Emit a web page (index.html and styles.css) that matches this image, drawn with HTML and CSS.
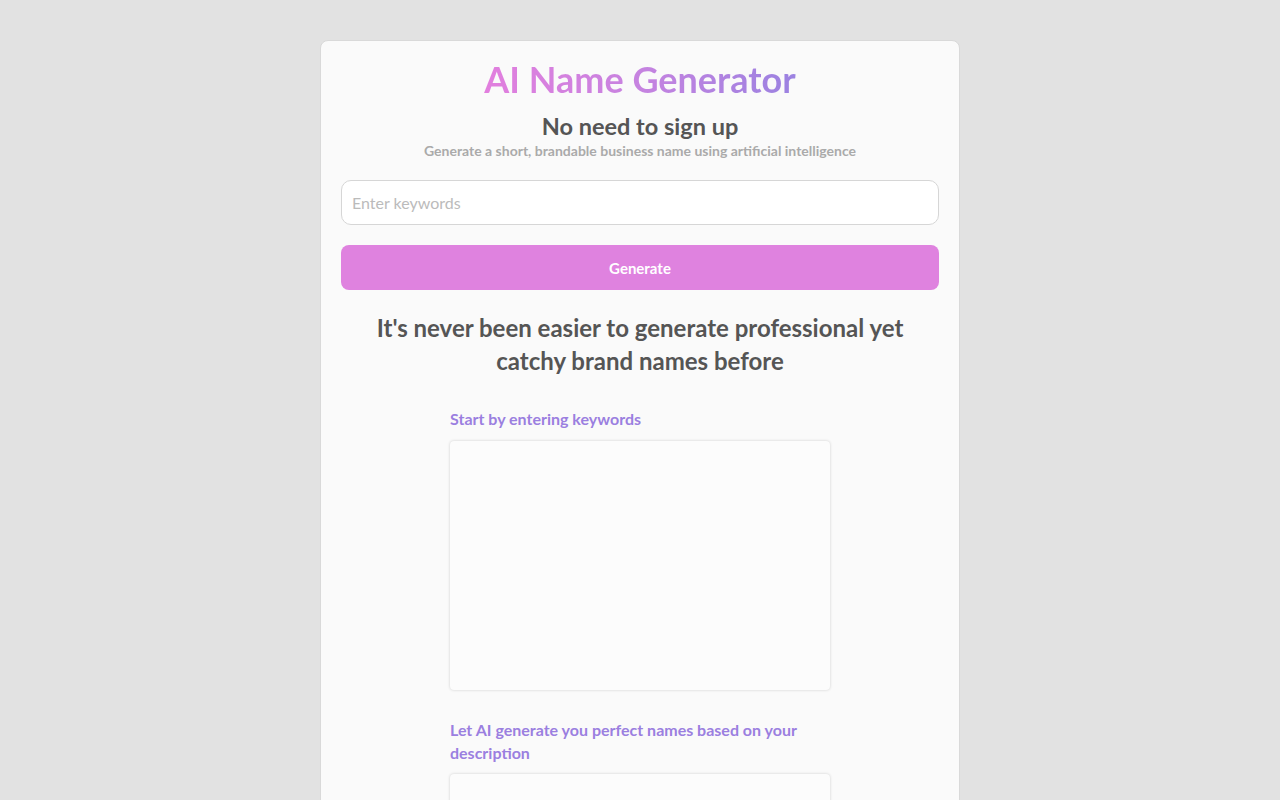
FILE: index.html
```html
<!DOCTYPE html>
<html>
<head>
<meta charset="utf-8">
<link rel="stylesheet" href="styles.css">
</head>
<body>
<main class="card">
  <h1 class="title">AI Name Generator</h1>
  <h2 class="subtitle">No need to sign up</h2>
  <p class="tagline">Generate a short, brandable business name using artificial intelligence</p>
  <input class="keywords" type="text" placeholder="Enter keywords">
  <button class="generate">Generate</button>
  <h3 class="pitch">It's never been easier to generate professional yet catchy brand names before</h3>
  <section class="steps">
    <div class="step">
      <p class="step-label">Start by entering keywords</p>
      <div class="step-box"></div>
    </div>
    <div class="step">
      <p class="step-label">Let AI generate you perfect names based on your description</p>
      <div class="step-box"></div>
    </div>
  </section>
</main>
</body>
</html>
```

FILE: styles.css
```css
* { box-sizing: border-box; }
html, body { margin: 0; padding: 0; }
body {
  background: #e2e2e2;
  font-family: Lato, "Open Sans", sans-serif;
  color: #555;
}
.card {
  width: 640px;
  margin: 40px auto 0;
  background: #fafafa;
  border: 1px solid #d9d9d9;
  border-radius: 8px;
  padding: 12px 20px 40px;
  display: flex;
  flex-direction: column;
  align-items: stretch;
  text-align: center;
}
.title {
  margin: 0;
  font-size: 36px;
  line-height: 52px;
  font-weight: 700;
  background: linear-gradient(90deg, #e27fde 0%, #c683e0 50%, #9b82e1 100%);
  -webkit-background-clip: text;
  background-clip: text;
  color: transparent;
  align-self: center;
}
.subtitle {
  margin: 7px 0 0;
  font-size: 23.5px;
  line-height: 28px;
  font-weight: 700;
  color: #555;
}
.tagline {
  margin: 0;
  font-size: 14px;
  line-height: 22px;
  font-weight: 700;
  color: #aaa;
}
.keywords {
  margin-top: 18px;
  height: 45px;
  border: 1px solid #d6d6d6;
  border-radius: 10px;
  background: #fff;
  padding: 0 10px;
  font-family: inherit;
  font-size: 16px;
  color: #555;
  outline: none;
}
.keywords::placeholder { color: #bbb; }
.generate {
  margin-top: 20px;
  height: 45px;
  border: none;
  border-radius: 8px;
  background: #df82df;
  color: #fff;
  font-family: inherit;
  font-size: 15px;
  font-weight: 700;
}
.pitch {
  margin: 21px 0 0;
  font-size: 24px;
  line-height: 33px;
  font-weight: 700;
  color: #555;
}
.steps {
  width: 380px;
  align-self: center;
  margin-top: 30px;
  text-align: left;
  display: flex;
  flex-direction: column;
  gap: 28px;
}
.step-label {
  margin: 0 0 10.5px;
  font-size: 16px;
  line-height: 23px;
  font-weight: 700;
  color: #9b7fe0;
}
.step-box {
  height: 249px;
  background: #fcfcfc;
  border-radius: 4px;
  box-shadow: 0 0 3px rgba(0,0,0,0.18);
}
```
